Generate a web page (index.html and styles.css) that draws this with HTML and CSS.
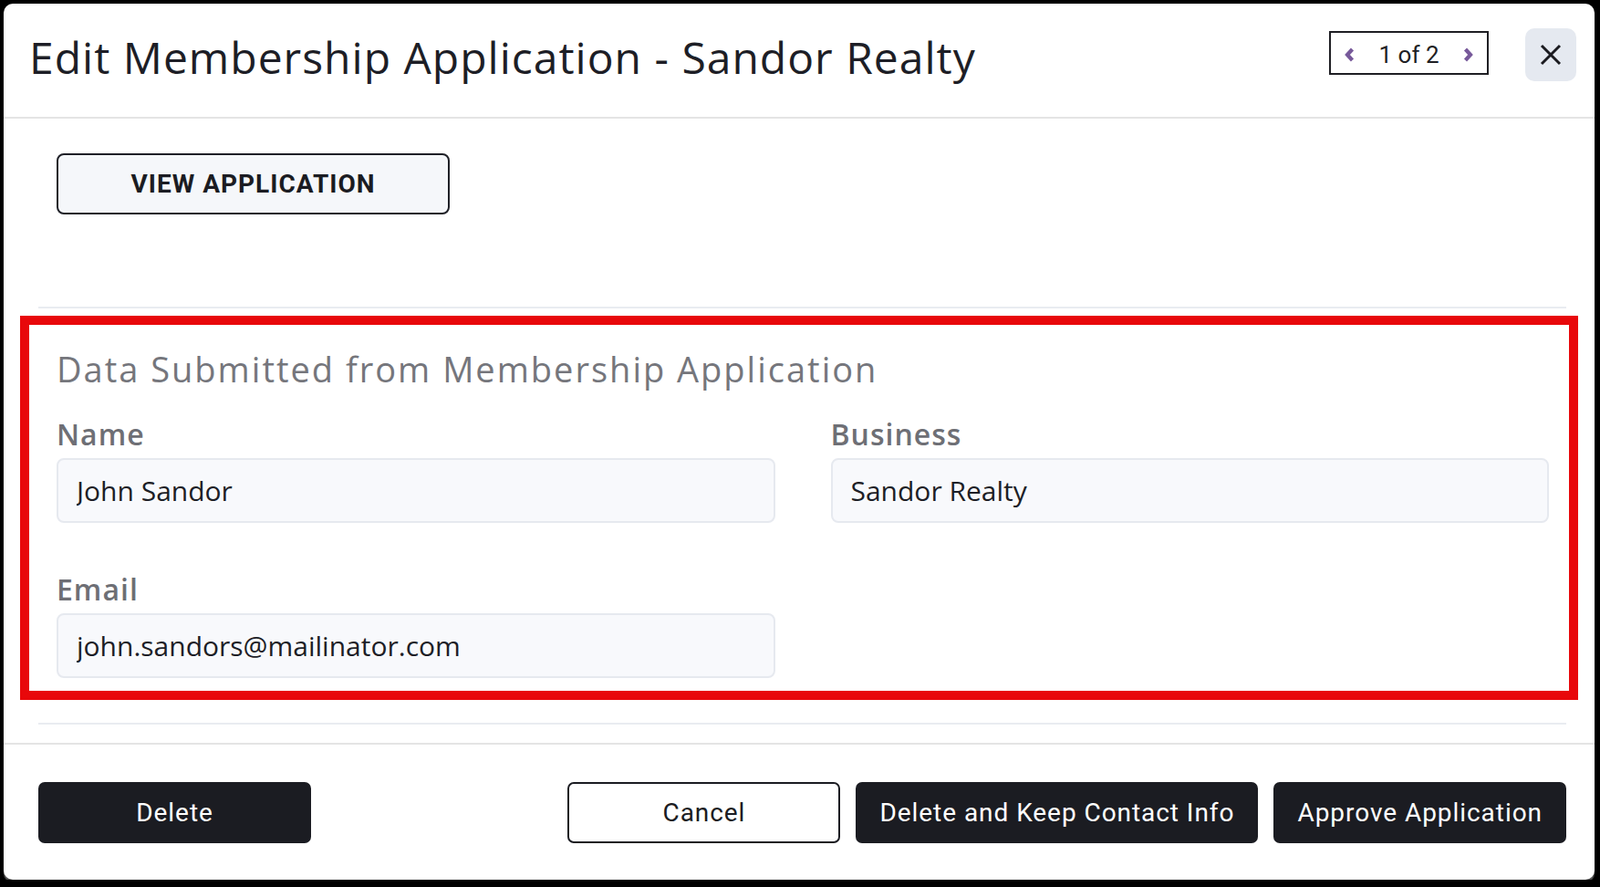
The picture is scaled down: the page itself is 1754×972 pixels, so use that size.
FILE: index.html
```html
<!DOCTYPE html>
<html lang="en">
<head>
  <meta charset="UTF-8" />
  <meta name="viewport" content="width=device-width, initial-scale=1.0"/>
  <title>Edit Membership Application</title>
  <link rel="stylesheet" href="styles.css">
</head>
<body>
  <div class="modal">
    <header class="modal-header">
      <h1 class="modal-title">Edit Membership Application - Sandor Realty</h1>
      <div class="pager">
        <button class="pager-arrow" aria-label="Previous">
          <svg width="11" height="16" viewBox="0 0 11 16"><path d="M8.5 2 L3 8 L8.5 14" /></svg>
        </button>
        <span class="pager-count">1 of 2</span>
        <button class="pager-arrow" aria-label="Next">
          <svg width="11" height="16" viewBox="0 0 11 16"><path d="M2.5 2 L8 8 L2.5 14" /></svg>
        </button>
      </div>
      <button class="close-btn" aria-label="Close">
        <svg width="24" height="24" viewBox="0 0 24 24"><path d="M2 2 L22 22 M22 2 L2 22" /></svg>
      </button>
    </header>

    <div class="modal-body">
      <button class="btn-view">VIEW APPLICATION</button>

      <hr class="divider">

      <section class="submitted">
        <h2>Data Submitted from Membership Application</h2>
        <div class="field-grid">
          <div class="field">
            <label for="name">Name</label>
            <input id="name" type="text" value="John Sandor" readonly>
          </div>
          <div class="field">
            <label for="business">Business</label>
            <input id="business" type="text" value="Sandor Realty" readonly>
          </div>
          <div class="field">
            <label for="email">Email</label>
            <input id="email" type="text" value="john.sandors@mailinator.com" readonly>
          </div>
        </div>
      </section>

      <hr class="divider divider-bottom">
    </div>

    <footer class="modal-footer">
      <button class="btn btn-dark">Delete</button>
      <div class="footer-right">
        <button class="btn btn-outline">Cancel</button>
        <button class="btn btn-dark">Delete and Keep Contact Info</button>
        <button class="btn btn-dark">Approve Application</button>
      </div>
    </footer>
  </div>
</body>
</html>
```

FILE: styles.css
```css
body {
  margin: 0;
  padding: 4px 0 0 4px;
  background-color: #000;
  font-family: 'Open Sans', 'Noto Sans', sans-serif;
  color: #1d1e26;
}

.modal {
  width: 1744px;
  background: white;
  border-radius: 10px;
  box-shadow: 0 3px 1px rgba(150, 150, 150, 0.55);
}

/* header */

.modal-header {
  display: flex;
  align-items: flex-start;
  box-sizing: border-box;
  height: 126px;
  padding: 27px 20px 0 28px;
  border-bottom: 2px solid #e4e4e4;
}

.modal-title {
  flex: 1;
  margin: 2px 0 0;
  font-size: 48px;
  font-weight: 400;
  line-height: 60px;
  letter-spacing: 1px;
  color: #1d1e26;
}

.pager {
  display: flex;
  align-items: center;
  justify-content: space-between;
  box-sizing: border-box;
  width: 175px;
  height: 48px;
  margin: 3px 40px 0 0;
  padding: 3px 15px 0 15px;
  border: 2px solid #1f1f24;
}

.pager-arrow {
  display: flex;
  padding: 0;
  border: none;
  background: none;
  cursor: pointer;
}

.pager-arrow path {
  fill: none;
  stroke: #77599a;
  stroke-width: 4.2;
}

.pager-count {
  font-family: 'Roboto', sans-serif;
  font-size: 26px;
  color: #1f1f24;
}

.close-btn {
  display: flex;
  align-items: center;
  justify-content: center;
  width: 56px;
  height: 58px;
  padding: 0;
  border: none;
  border-radius: 10px;
  background-color: #e5e9f0;
  cursor: pointer;
}

.close-btn path {
  stroke: #1b1b20;
  stroke-width: 3;
}

/* body */

.modal-body {
  padding: 38px 31px 20px 38px;
}

.btn-view {
  display: block;
  width: 431px;
  height: 67px;
  margin-left: 20px;
  border: 2px solid #1f2027;
  border-radius: 8px;
  background-color: #f5f7fa;
  font-family: 'Roboto', sans-serif;
  font-size: 28px;
  font-weight: 700;
  letter-spacing: 1px;
  color: #1b1c22;
  cursor: pointer;
}

.divider {
  height: 2px;
  margin: 101px 0 0;
  border: none;
  background-color: #e9ecf1;
}

.divider-bottom {
  margin-top: 25px;
}

.submitted {
  margin: 8px -13px 0 -20px;
  padding: 26px 22px 14px 30px;
  border: 10px solid #e8080b;
}

.submitted h2 {
  margin: 0 0 30px;
  font-size: 38px;
  font-weight: 400;
  line-height: 44px;
  letter-spacing: 2px;
  color: #75767c;
}

.field-grid {
  display: grid;
  grid-template-columns: 1fr 1fr;
  column-gap: 61px;
  row-gap: 53px;
}

.field label {
  display: block;
  margin-bottom: 6px;
  font-size: 32px;
  font-weight: 600;
  line-height: 40px;
  letter-spacing: 1px;
  color: #6e6f75;
}

.field input {
  display: block;
  box-sizing: border-box;
  width: 100%;
  height: 71px;
  padding: 0 20px;
  border: 2px solid #e6e9ef;
  border-radius: 8px;
  background-color: #f8f9fc;
  font-family: 'Open Sans', 'Noto Sans', sans-serif;
  font-size: 30px;
  color: #1d1e26;
  outline: none;
}

/* footer */

.modal-footer {
  display: flex;
  justify-content: space-between;
  padding: 41px 31px 40px 38px;
  border-top: 2px solid #e4e4e4;
}

.footer-right {
  display: flex;
  gap: 17px;
}

.btn {
  min-width: 299px;
  height: 67px;
  padding: 0 26px;
  border-radius: 7px;
  font-family: 'Roboto', sans-serif;
  font-size: 28px;
  font-weight: 400;
  letter-spacing: 0.95px;
  cursor: pointer;
}

.btn-dark {
  border: none;
  background-color: #1b1c22;
  color: white;
}

.btn-outline {
  border: 2px solid #1b1c22;
  background-color: white;
  color: #1b1c22;
}
```
